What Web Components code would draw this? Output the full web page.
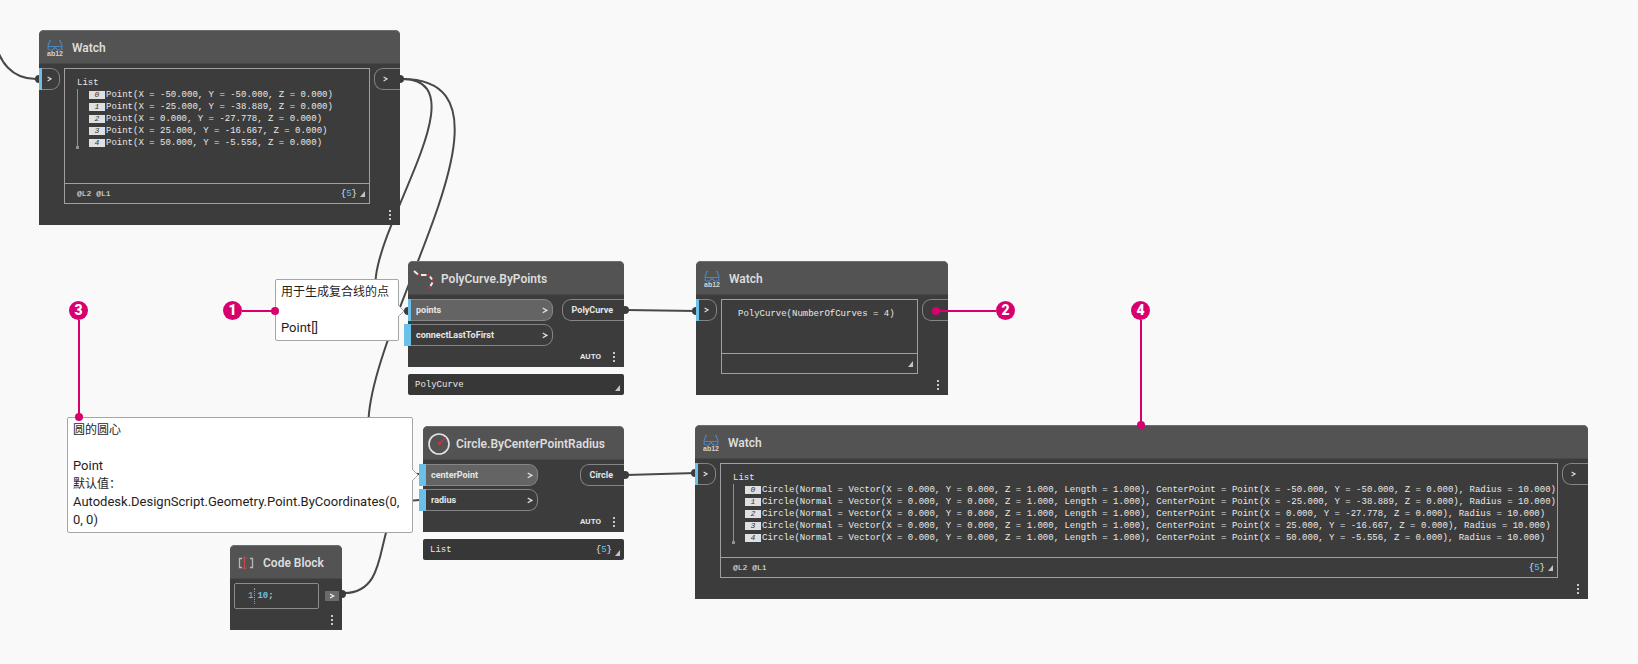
<!DOCTYPE html>
<html lang="zh-CN">
<head>
<meta charset="utf-8">
<title>Dynamo</title>
<style>
  body { margin: 0; background: #f9f9f9; font-family: Roboto, "Noto Sans CJK SC", sans-serif; }
  graph-canvas { min-height: 100vh; }
</style>
</head>
<body>
<graph-canvas>
  <graph-wires></graph-wires>

  <graph-node heading="Watch" style="left:39px;top:30px;width:361px">
    <icon-watch slot="icon"></icon-watch>
    <node-port slot="in" kind="in" linked></node-port>
    <watch-panel style="--content:114px" levels="@L2 @L1" count="5">
      <data-list items="Point(X = -50.000, Y = -50.000, Z = 0.000)|Point(X = -25.000, Y = -38.889, Z = 0.000)|Point(X = 0.000, Y = -27.778, Z = 0.000)|Point(X = 25.000, Y = -16.667, Z = 0.000)|Point(X = 50.000, Y = -5.556, Z = 0.000)"></data-list>
    </watch-panel>
    <node-port slot="out" kind="out"></node-port>
  </graph-node>

  <graph-node heading="PolyCurve.ByPoints" style="left:408px;top:261px;width:216px;--in-width:145px">
    <icon-polycurve slot="icon"></icon-polycurve>
    <node-port slot="in" kind="in" label="points" linked active></node-port>
    <node-port slot="in" kind="in" label="connectLastToFirst"></node-port>
    <node-port slot="out" kind="out" label="PolyCurve"></node-port>
    <span slot="lacing">AUTO</span>
    <node-preview slot="preview" text="PolyCurve"></node-preview>
  </graph-node>

  <graph-node heading="Watch" style="left:696px;top:261px;width:252px">
    <icon-watch slot="icon"></icon-watch>
    <node-port slot="in" kind="in" linked></node-port>
    <watch-panel style="--content:53px"><span>PolyCurve(NumberOfCurves = 4)</span></watch-panel>
    <node-port slot="out" kind="out" bare></node-port>
  </graph-node>

  <graph-node heading="Circle.ByCenterPointRadius" style="left:423px;top:426px;width:201px;--in-width:115px">
    <icon-circle slot="icon"></icon-circle>
    <node-port slot="in" kind="in" label="centerPoint" active></node-port>
    <node-port slot="in" kind="in" label="radius"></node-port>
    <node-port slot="out" kind="out" label="Circle"></node-port>
    <span slot="lacing">AUTO</span>
    <node-preview slot="preview" text="List" count="5"></node-preview>
  </graph-node>

  <graph-node heading="Watch" style="left:695px;top:425px;width:893px">
    <icon-watch slot="icon"></icon-watch>
    <node-port slot="in" kind="in" linked></node-port>
    <watch-panel style="--content:93px" levels="@L2 @L1" count="5">
      <data-list items="Circle(Normal = Vector(X = 0.000, Y = 0.000, Z = 1.000, Length = 1.000), CenterPoint = Point(X = -50.000, Y = -50.000, Z = 0.000), Radius = 10.000)|Circle(Normal = Vector(X = 0.000, Y = 0.000, Z = 1.000, Length = 1.000), CenterPoint = Point(X = -25.000, Y = -38.889, Z = 0.000), Radius = 10.000)|Circle(Normal = Vector(X = 0.000, Y = 0.000, Z = 1.000, Length = 1.000), CenterPoint = Point(X = 0.000, Y = -27.778, Z = 0.000), Radius = 10.000)|Circle(Normal = Vector(X = 0.000, Y = 0.000, Z = 1.000, Length = 1.000), CenterPoint = Point(X = 25.000, Y = -16.667, Z = 0.000), Radius = 10.000)|Circle(Normal = Vector(X = 0.000, Y = 0.000, Z = 1.000, Length = 1.000), CenterPoint = Point(X = 50.000, Y = -5.556, Z = 0.000), Radius = 10.000)"></data-list>
    </watch-panel>
    <node-port slot="out" kind="out"></node-port>
  </graph-node>

  <graph-node heading="Code Block" style="left:230px;top:545px;width:112px">
    <icon-code slot="icon"></icon-code>
    <code-editor line="1" number="10"></code-editor>
  </graph-node>

  <port-tip style="left:275px;top:279px;width:124px;--tip-y:24px">
    <p class="zh">用于生成复合线的点</p><p><br></p><p>Point[]</p>
  </port-tip>
  <port-tip style="left:67px;top:417px;width:346px;--tip-y:50px">
    <p class="zh">圆的圆心</p><p><br></p><p>Point</p><p class="zh">默认值：</p>
    <p>Autodesk.DesignScript.Geometry.Point.ByCoordinates(0, 0, 0)</p>
  </port-tip>

  <call-out dir="right" style="left:223px;top:301px;--reach:31px">1</call-out>
  <call-out dir="left" style="left:934px;top:301px;--reach:58px">2</call-out>
  <call-out dir="down" style="left:69px;top:301px;--reach:95px">3</call-out>
  <call-out dir="down" style="left:1131px;top:301px;--reach:103px">4</call-out>
</graph-canvas>

<script>
const BLUE = '#6ac0e7';
const MONO = '"Liberation Mono", monospace';

function define(name, render) {
  customElements.define(name, class extends HTMLElement {
    connectedCallback() {
      if (this.shadowRoot) return;
      this.attachShadow({ mode: 'open' }).innerHTML = render(this);
    }
  });
}

const count = n => n ? `<span class="count">{<b>${n}</b>}</span>` : '';
const grip = '<svg class="grip" width="5" height="6" viewBox="0 0 5 6" aria-hidden="true"><path d="M5 0V6H0Z" fill="#c4c4c4"/></svg>';

define('graph-canvas', () => `
  <style>:host { display: block; position: relative; overflow: hidden; }</style><slot></slot>`);

define('graph-wires', () => `
  <style>:host { position: absolute; inset: 0; } svg { display: block; width: 100%; height: 100%; }</style>
  <svg fill="none" stroke="#484848" stroke-width="2" aria-hidden="true">
    <path d="M-6 36C-2 62 12 79 36 79"/>
    <path d="M402 79C503 79 305 311 404 311"/>
    <path d="M402 79C576 79 249 474 419 474"/>
    <path d="M344 593C400 593 366 500 419 500"/>
    <path d="M626 310L696 311"/>
    <path d="M626 475L696 473"/>
    <g fill="#3c3c3c" stroke="none">
      <circle cx="39" cy="79" r="4"/><circle cx="400" cy="79" r="4"/>
      <circle cx="408" cy="311" r="4"/><circle cx="625" cy="310" r="4"/>
      <circle cx="696" cy="311" r="4"/><circle cx="625" cy="475" r="4"/>
      <circle cx="695" cy="473" r="4"/><circle cx="342" cy="594" r="4"/>
    </g>
  </svg>`);

define('graph-node', el => `
  <style>
    :host { position: absolute; display: block; }
    .node { background: #3c3c3c; border-radius: 5px 5px 0 0; }
    header { display: flex; align-items: center; gap: 7px; height: 34px; padding: 2px 0 0 6px; box-sizing: border-box;
      background: #535353; border-radius: 5px 5px 0 0; border-top: 1px solid #6e6e6e; border-bottom: 1px solid #484848; }
    h2 { margin: 0; font-size: 12px; line-height: 16px; font-weight: 600; color: #dcdcdc; white-space: nowrap; }
    .body { display: flex; align-items: flex-start; justify-content: space-between; gap: 4px; padding-top: 4px; }
    .col { display: flex; flex-direction: column; gap: 3px; }
    .col.empty { display: none; }
    footer { display: flex; align-items: center; justify-content: flex-end; gap: 10px; height: 21px; padding-right: 7px;
      font-size: 8px; font-weight: 700; line-height: 12px; color: #e6e6e6; }
    button { all: unset; width: 6px; height: 12px; display: flex; justify-content: center; }
  </style>
  <article class="node">
    <header><slot name="icon"></slot><h2>${el.getAttribute('heading')}</h2></header>
    <div class="body">
      <div class="col ${el.querySelector('[slot=in]') ? '' : 'empty'}"><slot name="in"></slot></div>
      <slot></slot>
      <div class="col ${el.querySelector('[slot=out]') ? '' : 'empty'}"><slot name="out"></slot></div>
    </div>
    <footer><slot name="lacing"></slot>
      <button type="button" aria-label="More"><svg width="2" height="12" viewBox="0 0 2 12" fill="#c8c8c8"><path d="M0 1h2v2H0zM0 5h2v2H0zM0 9h2v2H0z"/></svg></button>
    </footer>
  </article>
  <slot name="preview"></slot>`);

define('node-port', el => {
  const label = el.getAttribute('label'), isIn = el.getAttribute('kind') === 'in';
  return `
  <style>
    :host { display: block; position: relative; }
    button { all: unset; box-sizing: border-box; display: flex; align-items: center; justify-content: space-between;
      height: 22px; border: 1px solid #858585; font-size: 9px; line-height: 12px; font-weight: 700; color: #e6e6e6; white-space: nowrap; }
    .in { width: ${label ? 'var(--in-width)' : '21px'}; border-left: 0; border-radius: 0 9px 9px 0; padding: 0 4px 0 8px; }
    .out { min-width: 26px; border-right: 0; border-radius: 9px 0 0 9px; padding: 0 ${label ? '11px 0 9px' : '8px'}; }
    .active { background: #646464; }
    .strip { position: absolute; top: 0; bottom: 0; left: 0; width: 3px; background: ${BLUE}; }
    .strip.open { left: -4px; width: 7px; }
  </style>
  <button type="button" class="${isIn ? 'in' : 'out'} ${el.hasAttribute('active') ? 'active' : ''}" aria-label="${label || 'port'}">
    ${label ? `<span>${label}</span>` : ''}${(isIn || !label) && !el.hasAttribute('bare') ? `<svg width="${label ? 6 : 5}" height="${label ? 7 : 6}" viewBox="0 0 6 7" fill="none" stroke="#dedede" stroke-width="1.3"><path d="M.7 1L4.8 3.4L.7 5.8"/></svg>` : ''}
  </button>
  ${isIn ? `<i class="strip ${el.hasAttribute('linked') ? '' : 'open'}"></i>` : ''}`;
});

define('watch-panel', el => `
  <style>
    :host { display: flex; flex-direction: column; flex: 1; min-width: 0; box-sizing: border-box; border: 1px solid #a0a0a0;
      font: 9px/12px ${MONO}; color: #e8e8e8; white-space: nowrap; }
    .content { min-height: var(--content); box-sizing: border-box; padding: 8px 0 0 12px; }
    ::slotted(span) { display: block; padding-left: 4px; }
    footer { display: flex; align-items: center; gap: 3px; height: 20px; box-sizing: border-box; padding: 0 4px 0 12px; border-top: 1px solid #a0a0a0; }
    .levels { flex: 1; font-size: 8px; }
    b { color: ${BLUE}; font-weight: 400; }
  </style>
  <div class="content"><slot></slot></div>
  <footer><span class="levels">${el.getAttribute('levels') || ''}</span>${count(el.getAttribute('count'))}${grip}</footer>`);

define('data-list', el => `
  <style>
    :host { display: block; }
    ol { position: relative; list-style: none; margin: 0; padding: 0 0 0 12px; }
    ol::before { content: ""; position: absolute; left: 0; top: 0; bottom: 2px; width: 1px; background: #909090; }
    ol::after { content: ""; position: absolute; left: -1px; bottom: 0; width: 3px; height: 3px; background: #909090; }
    li { display: flex; align-items: center; gap: 1px; height: 12px; }
    i { flex: none; width: 16px; height: 8px; background: #e0e0e0; color: #333; font-size: 8px; line-height: 8px; text-align: center; }
  </style>
  <div>List</div>
  <ol>${el.getAttribute('items').split('|').map((t, i) => `<li><i>${i}</i><span>${t}</span></li>`).join('')}</ol>`);

define('node-preview', el => `
  <style>
    :host { display: flex; align-items: center; gap: 3px; height: 21px; margin-top: 7px; padding: 0 4px 0 7px; background: #373737; border-radius: 2px;
      font: 9px/12px ${MONO}; color: #e8e8e8; }
    .text { flex: 1; }
    b { color: ${BLUE}; font-weight: 400; }
    .grip { align-self: flex-end; margin-bottom: 4px; }
  </style>
  <span class="text">${el.getAttribute('text')}</span>${count(el.getAttribute('count'))}${grip}`);

define('code-editor', el => `
  <style>
    :host { display: flex; flex: 1; align-items: center; gap: 6px; padding: 0 3px 0 4px; }
    .field { flex: 1; display: flex; align-items: center; height: 26px; box-sizing: border-box; border: 1px solid #8c8c8c; border-radius: 2px;
      padding-left: 13px; font: 9px/12px ${MONO}; color: #e8e8e8; }
    .line { color: #b4b4b4; padding-right: 1px; border-right: 1px dotted #999; margin-right: 2px; line-height: 16px; }
    b { color: ${BLUE}; }
    button { all: unset; display: flex; align-items: center; justify-content: center; width: 14px; height: 10px; background: #6a6a6a; }
  </style>
  <code class="field" role="textbox" aria-label="Code" contenteditable="true" spellcheck="false"><span class="line">${el.getAttribute('line')}</span><b>${el.getAttribute('number')}</b><span>;</span></code>
  <button type="button" aria-label="port"><svg width="6" height="6" viewBox="0 0 6 6" fill="none" stroke="#eee" stroke-width="1.3"><path d="M1 1L4.6 3L1 5"/></svg></button>`);

define('port-tip', () => `
  <style>
    :host { position: absolute; display: block; box-sizing: border-box; padding: 3px 0 3px 5px; background: #fff;
      border: 1px solid #a6a6a6; border-radius: 2px; font-size: 13px; line-height: 18px; color: #1e1e1e; }
    ::slotted(p) { margin: 0; }
    ::slotted(.zh) { font-size: 12px; }
    svg { position: absolute; left: 100%; top: var(--tip-y); }
  </style>
  <slot></slot>
  <svg width="7" height="14" viewBox="0 0 7 14" aria-hidden="true"><path d="M-1 0L6 7L-1 14Z" fill="#fff"/><path d="M0 1L6 7L0 13" fill="none" stroke="#a6a6a6"/></svg>`);

define('call-out', el => {
  const dir = { right: 'row', left: 'row-reverse', down: 'column' }[el.getAttribute('dir')];
  const line = dir === 'column' ? 'width:2px;height:var(--reach)' : 'height:2px;width:var(--reach)';
  return `
  <style>
    :host { position: absolute; display: flex; flex-direction: ${dir}; align-items: center; }
    .num { width: 19px; height: 19px; border-radius: 50%; background: #d8006e; color: #fff; font-size: 14px; font-weight: 900; line-height: 19px; text-align: center; }
    .line { ${line}; background: #d8006e; }
    .dot { width: 8px; height: 8px; margin: -2px; border-radius: 50%; background: #d8006e; }
  </style>
  <span class="num"><slot></slot></span><i class="line"></i><i class="dot"></i>`;
});

const iconBox = 'display:flex;justify-content:center;width:20px';
define('icon-watch', () => `
  <style>:host { ${iconBox} } svg { display: block; } text { font: 700 7px "Liberation Sans", sans-serif; }</style>
  <svg width="16" height="18" viewBox="0 0 16 18" fill="none" aria-hidden="true">
    <path d="M4 1.5H3L1.2 6V11M12 1.5H13L14.8 6V11M1.2 7.5H14.8M2 11H5.5L8 8.5L10.5 11H14" stroke="#4a86c0" stroke-width="1.2"/>
    <text x="0" y="17" fill="#d2d2d2">ab12</text>
  </svg>`);
define('icon-polycurve', () => `
  <style>:host { ${iconBox} } svg { display: block; flex: none; }</style>
  <svg width="22" height="22" viewBox="0 0 22 22" fill="none" aria-hidden="true">
    <path d="M1 3L5 6.5M8 7H13.5M17 8.5L19 11.5M19.5 14.5L17.5 18" stroke="#ececec" stroke-width="2"/>
    <g fill="#c22f36"><circle cx="6" cy="7" r="1.3"/><circle cx="15.5" cy="7" r="1.3"/><circle cx="20" cy="13" r="1.3"/><circle cx="16.500" cy="19.500" r="1.3"/></g>
  </svg>`);
define('icon-circle', () => `
  <style>:host { ${iconBox} } svg { display: block; flex: none; }</style>
  <svg width="22" height="22" viewBox="0 0 22 22" fill="none" aria-hidden="true">
    <circle cx="11" cy="11" r="10" stroke="#e4e4e4" stroke-width="1.6"/>
    <path d="M11.5 10.5L17.5 4.5" stroke="#b04048" stroke-width="1.2"/><circle cx="11.5" cy="10.5" r="1.7" fill="#c9343c"/>
  </svg>`);
define('icon-code', () => `
  <style>:host { ${iconBox} } svg { display: block; }</style>
  <svg width="16" height="12" viewBox="0 0 16 12" fill="none" aria-hidden="true">
    <path d="M4 1.5H1.5V10.5H4M12 1.5H14.5V10.5H12" stroke="#b8b8b8" stroke-width="1.3"/>
    <path d="M4.5 .8H8.5M4.5 11.2H8.5M6.5 1V11" stroke="#c4454b" stroke-width="1.4"/>
  </svg>`);
</script>
</body>
</html>
